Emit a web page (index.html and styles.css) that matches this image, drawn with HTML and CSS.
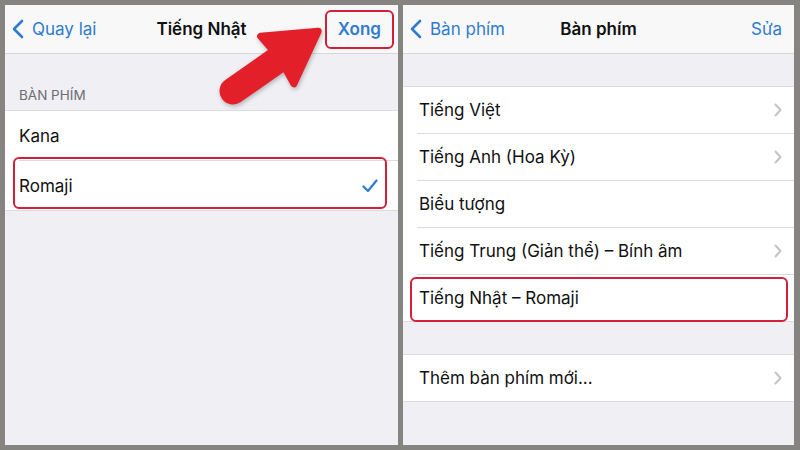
FILE: index.html
```html
<!DOCTYPE html>
<html lang="vi">
<head>
    <meta charset="UTF-8">
    <meta name="viewport" content="width=device-width, initial-scale=1.0">
    <title>Bàn phím</title>
    <link rel="stylesheet" href="styles.css">
</head>
<body>
    <div class="frame">
        <!-- Màn hình trái: Tiếng Nhật -->
        <div class="screen screen-left">
            <div class="navbar">
                <div class="nav-back">
                    <svg class="back-icon" viewBox="0 0 12 20"><polyline points="10,2 2,10 10,18"/></svg>
                    <span>Quay lại</span>
                </div>
                <div class="nav-title">Tiếng Nhật</div>
                <div class="nav-action bold">Xong</div>
            </div>
            <div class="section-title">BÀN PHÍM</div>
            <div class="group">
                <div class="row"><span>Kana</span></div>
                <div class="row"><span>Romaji</span>
                    <svg class="check" viewBox="0 0 16 14"><polyline points="1.5,7.5 6,12 14.5,1.5"/></svg>
                </div>
            </div>
            <div class="mark mark-done"></div>
            <div class="mark mark-romaji"></div>
            <svg class="arrow" viewBox="0 0 140 110">
                <g transform="translate(36,82) rotate(-35)">
                    <path d="M0,-10 L56,-10 L54,-29 L104,0 L54,29 L56,10 L0,10 A10,10 0 0 1 0,-10 Z"/>
                </g>
            </svg>
        </div>

        <!-- Màn hình phải: Bàn phím -->
        <div class="screen screen-right">
            <div class="navbar">
                <div class="nav-back">
                    <svg class="back-icon" viewBox="0 0 12 20"><polyline points="10,2 2,10 10,18"/></svg>
                    <span>Bàn phím</span>
                </div>
                <div class="nav-title">Bàn phím</div>
                <div class="nav-action">Sửa</div>
            </div>
            <div class="spacer"></div>
            <div class="group">
                <div class="row"><span>Tiếng Việt</span><svg class="chevron" viewBox="0 0 8 14"><polyline points="1.5,1.5 6.5,7 1.5,12.5"/></svg></div>
                <div class="row"><span>Tiếng Anh (Hoa Kỳ)</span><svg class="chevron" viewBox="0 0 8 14"><polyline points="1.5,1.5 6.5,7 1.5,12.5"/></svg></div>
                <div class="row"><span>Biểu tượng</span></div>
                <div class="row"><span>Tiếng Trung (Giản thể) – Bính âm</span><svg class="chevron" viewBox="0 0 8 14"><polyline points="1.5,1.5 6.5,7 1.5,12.5"/></svg></div>
                <div class="row"><span>Tiếng Nhật – Romaji</span></div>
            </div>
            <div class="spacer"></div>
            <div class="group">
                <div class="row"><span>Thêm bàn phím mới...</span><svg class="chevron" viewBox="0 0 8 14"><polyline points="1.5,1.5 6.5,7 1.5,12.5"/></svg></div>
            </div>
            <div class="mark mark-romaji-right"></div>
        </div>
    </div>
</body>
</html>
```

FILE: styles.css
```css
body {
    margin: 0;
    background-color: #868480;
    font-family: Inter, "Noto Sans", sans-serif;
    color: #111;
}

.frame {
    display: flex;
    gap: 5px;
    padding: 5px 6px 5px 5px;
    height: 440px;
}

.screen {
    position: relative;
    background-color: #efeff4;
    overflow: hidden;
}

.screen-left {
    width: 393px;
}

.screen-right {
    width: 391px;
}

.navbar {
    display: flex;
    align-items: center;
    height: 48px;
    background-color: #f8f8f9;
    border-bottom: 1px solid #d7d7da;
    position: relative;
    font-size: 17px;
}

.nav-back {
    display: flex;
    align-items: center;
    gap: 8px;
    padding-left: 7px;
    color: #2f7bd0;
}

.back-icon {
    width: 12px;
    height: 20px;
    fill: none;
    stroke: #2f7bd0;
    stroke-width: 2.6;
    stroke-linecap: round;
    stroke-linejoin: round;
}

.nav-title {
    position: absolute;
    left: 0;
    right: 0;
    text-align: center;
    font-weight: 600;
    pointer-events: none;
}

.nav-action {
    margin-left: auto;
    padding-right: 12px;
    color: #2f7bd0;
}

.nav-action.bold {
    font-weight: 600;
    padding-right: 17px;
}

.section-title {
    padding: 33px 0 7px 14px;
    font-size: 13.5px;
    color: #6d6d72;
}

.spacer {
    height: 32px;
}

.group {
    background-color: #fff;
    border-top: 1px solid #dcdcdf;
    border-bottom: 1px solid #dcdcdf;
}

.row {
    display: flex;
    align-items: center;
    height: 49px;
    padding: 0 12px 0 14px;
    font-size: 17px;
    position: relative;
}

.screen-right .row {
    height: 46px;
    padding-left: 16px;
}

.row + .row::before {
    content: "";
    position: absolute;
    top: -1px;
    left: 14px;
    right: 0;
    border-top: 1px solid #dcdcdf;
}

.row + .row {
    margin-top: 1px;
}

.chevron {
    margin-left: auto;
    width: 8px;
    height: 14px;
    fill: none;
    stroke: #c4c4c8;
    stroke-width: 2;
    stroke-linecap: round;
    stroke-linejoin: round;
}

.check {
    margin-left: auto;
    margin-right: 8px;
    width: 16px;
    height: 14px;
    fill: none;
    stroke: #2f7bd0;
    stroke-width: 2.2;
    stroke-linecap: round;
    stroke-linejoin: round;
}

.mark {
    position: absolute;
    border: 2px solid #d41f3a;
    border-radius: 6px;
    box-sizing: border-box;
}

.mark-done {
    left: 320px;
    top: 5px;
    width: 69px;
    height: 39px;
}

.mark-romaji {
    left: 8px;
    top: 152px;
    width: 374px;
    height: 52px;
}

.mark-romaji-right {
    left: 7px;
    top: 272px;
    width: 378px;
    height: 45px;
}

.arrow {
    position: absolute;
    left: 192px;
    top: 4px;
    width: 140px;
    height: 110px;
    fill: #e3202a;
    stroke: #e3202a;
    stroke-width: 7;
    stroke-linejoin: round;
    filter: drop-shadow(1px 2px 2px rgba(0, 0, 0, 0.25));
}
```
